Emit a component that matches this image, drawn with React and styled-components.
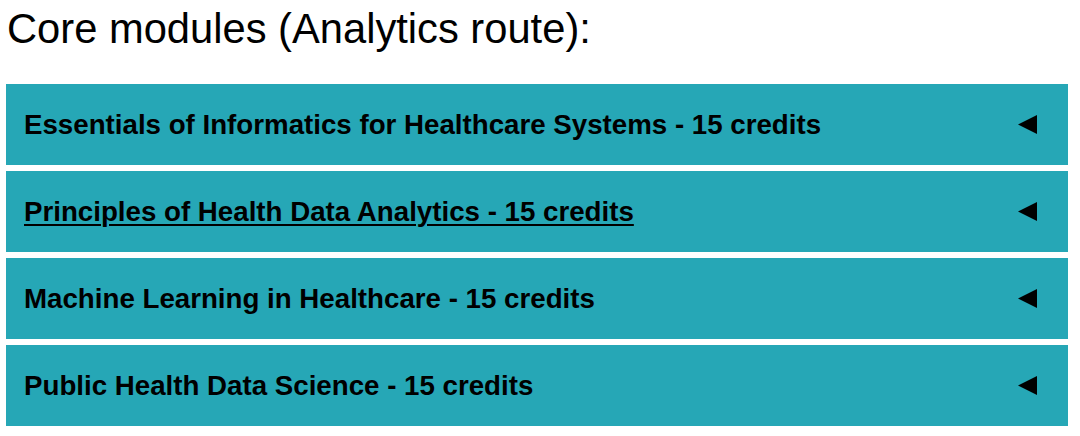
import React from 'react'
import styled, { createGlobalStyle } from 'styled-components'

const Global = createGlobalStyle`
  body {
    margin: 0;
    background: #ffffff;
    font-family: "Liberation Sans", Arial, sans-serif;
  }
`

const modules = [
  { title: 'Essentials of Informatics for Healthcare Systems - 15 credits' },
  { title: 'Principles of Health Data Analytics - 15 credits', hover: true },
  { title: 'Machine Learning in Healthcare - 15 credits' },
  { title: 'Public Health Data Science - 15 credits' },
]

export default function App() {
  return (
    <Page>
      <Global />
      <Heading>Core modules (Analytics route):</Heading>
      <List>
        {modules.map((m) => (
          <Panel key={m.title}>
            <Label $underline={m.hover}>{m.title}</Label>
            <Arrow viewBox="0 0 19 19" aria-hidden="true">
              <polygon points="19,0 19,19 0,9.5" />
            </Arrow>
          </Panel>
        ))}
      </List>
    </Page>
  )
}

const Page = styled.div`
  padding: 0 12px 0 6px;
`

const Heading = styled.h2`
  margin: 0;
  padding: 5px 0 0 1px;
  height: 84px;
  box-sizing: border-box;
  font-size: 41.7px;
  font-weight: 400;
  line-height: 48px;
  color: #000;
`

const List = styled.div`
  display: flex;
  flex-direction: column;
  gap: 6px;
`

const Panel = styled.div`
  height: 81px;
  background: #26a7b6;
  display: flex;
  align-items: center;
  justify-content: space-between;
  padding: 0 31px 0 18px;
  box-sizing: border-box;
`

const Label = styled.span`
  font-size: 27.7px;
  font-weight: 700;
  color: #000;
  text-decoration: ${(p) => (p.$underline ? 'underline' : 'none')};
  text-decoration-thickness: 2px;
  text-underline-offset: 3px;
`

const Arrow = styled.svg`
  width: 19px;
  height: 19px;
  fill: #000;
  flex-shrink: 0;
`
